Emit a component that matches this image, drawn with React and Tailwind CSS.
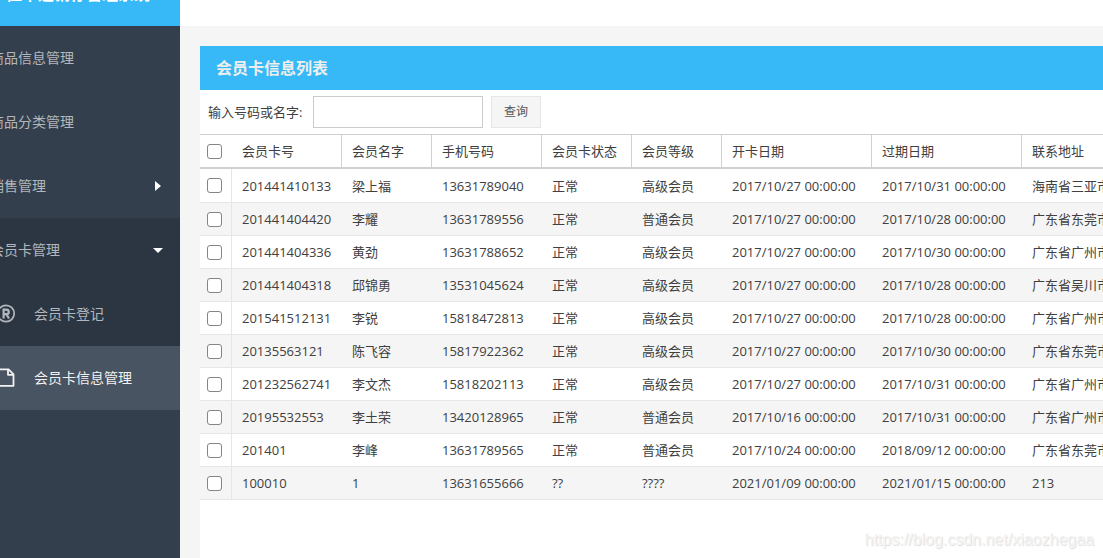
import React from 'react';

const menuItems = [
    { label: '商品信息管理' },
    { label: '商品分类管理' },
    { label: '销售管理', arrow: 'right' },
    { label: '会员卡管理', arrow: 'down', open: true },
];

const columns = [
    { title: '会员卡号', width: 'w-[110px]' },
    { title: '会员名字', width: 'w-[90px]' },
    { title: '手机号码', width: 'w-[110px]' },
    { title: '会员卡状态', width: 'w-[90px]' },
    { title: '会员等级', width: 'w-[90px]' },
    { title: '开卡日期', width: 'w-[150px]' },
    { title: '过期日期', width: 'w-[150px]' },
    { title: '联系地址', width: 'w-[200px]' },
];

const members = [
    ['201441410133', '梁上福', '13631789040', '正常', '高级会员', '2017/10/27 00:00:00', '2017/10/31 00:00:00', '海南省三亚市'],
    ['201441404420', '李耀', '13631789556', '正常', '普通会员', '2017/10/27 00:00:00', '2017/10/28 00:00:00', '广东省东莞市'],
    ['201441404336', '黄劲', '13631788652', '正常', '高级会员', '2017/10/27 00:00:00', '2017/10/30 00:00:00', '广东省广州市'],
    ['201441404318', '邱锦勇', '13531045624', '正常', '高级会员', '2017/10/27 00:00:00', '2017/10/28 00:00:00', '广东省吴川市'],
    ['201541512131', '李锐', '15818472813', '正常', '高级会员', '2017/10/27 00:00:00', '2017/10/28 00:00:00', '广东省广州市'],
    ['20135563121', '陈飞容', '15817922362', '正常', '高级会员', '2017/10/27 00:00:00', '2017/10/30 00:00:00', '广东省东莞市'],
    ['201232562741', '李文杰', '15818202113', '正常', '高级会员', '2017/10/27 00:00:00', '2017/10/31 00:00:00', '广东省广州市'],
    ['20195532553', '李土荣', '13420128965', '正常', '普通会员', '2017/10/16 00:00:00', '2017/10/31 00:00:00', '广东省广州市'],
    ['201401', '李峰', '13631789565', '正常', '普通会员', '2017/10/24 00:00:00', '2018/09/12 00:00:00', '广东省东莞市'],
    ['100010', '1', '13631655666', '??', '????', '2021/01/09 00:00:00', '2021/01/15 00:00:00', '213'],
];

const Arrow = ({ direction }) => (
    <svg className="ml-auto mr-4 h-3 w-3" viewBox="0 0 12 12" fill="#fff" aria-hidden="true">
        {direction === 'right' ? <path d="M3 1v10l6-5z" /> : <path d="M1 4h10L6 9z" />}
    </svg>
);

const RegisteredIcon = () => (
    <svg className="h-5 w-5" viewBox="0 0 20 20" fill="none" stroke="currentColor" aria-hidden="true">
        <circle cx="10" cy="9.5" r="8.2" strokeWidth="1.7" />
        <path d="M7.6 14.5V5.6h2.6c3.4 0 3.4 4.6 0 4.6H7.6M10.4 10.2l2.6 4.3" strokeWidth="2.2" />
    </svg>
);

const FileIcon = () => (
    <svg className="h-5 w-5" viewBox="0 0 20 20" fill="none" stroke="currentColor" strokeWidth="1.8" strokeLinejoin="round" aria-hidden="true">
        <path d="M1.8 1.4h10.8l4.9 4.9v11.5H1.8z" />
        <path d="M12 1.4v5.4h5.5" />
    </svg>
);

// the header is scrolled almost out of view, only its lower part stays visible
const Sidebar = () => (
    <aside className="flex w-[180px] shrink-0 justify-end overflow-hidden bg-[#333f4c] text-sm text-[#b3b7bc]">
        <div className="w-60 shrink-0">
            <div className="flex h-[26px] flex-col justify-end overflow-hidden bg-[#36b9f6]">
                <h1 className="flex h-16 shrink-0 items-center whitespace-nowrap pl-[66px] text-base font-bold text-white">
                    佳丰进销存管理系统
                </h1>
            </div>
            <nav>
                {menuItems.map((item) => (
                    <a key={item.label} href="#" className={`flex h-16 items-center pl-[50px] ${item.open ? 'bg-[#2c3643]' : ''}`}>
                        {item.label}
                        {item.arrow && <Arrow direction={item.arrow} />}
                    </a>
                ))}
                <a href="#" className="flex h-16 items-center gap-[18px] bg-[#2c3643] pl-14">
                    <RegisteredIcon />
                    会员卡登记
                </a>
                <a href="#" className="flex h-16 items-center gap-[18px] bg-[#485461] pl-14 text-[#f2f2f2]">
                    <FileIcon />
                    会员卡信息管理
                </a>
            </nav>
        </div>
    </aside>
);

const Checkbox = ({ label }) => (
    <input
        type="checkbox"
        aria-label={label}
        className="ml-[7px] block h-[15px] w-[15px] appearance-none rounded-[3px] border border-[#858585] bg-white"
    />
);

const MemberTable = () => (
    <table className="w-full min-w-[1022px] table-fixed border-separate border-spacing-0 text-left">
        <thead>
            <tr>
                <th className="h-[35px] w-8 border-b-2 border-t border-[#d0d0d0] p-0"><Checkbox label="全选" /></th>
                {columns.map((col) => (
                    <th key={col.title} className={`${col.width} border-b-2 border-r border-t border-[#d0d0d0] p-0 pl-[10px] font-normal`}>{col.title}</th>
                ))}
            </tr>
        </thead>
        <tbody>
            {members.map((row, index) => (
                <tr key={row[0]} className={`even:bg-[#f5f5f5] ${index === 0 ? 'h-[34px]' : 'h-[33px]'}`}>
                    <td className="border-b border-r border-[#e6e6e6] p-0"><Checkbox label={row[0]} /></td>
                    {row.map((cell, i) => (
                        <td key={i} className="whitespace-nowrap border-b border-[#e6e6e6] p-0 pl-[10px]">{cell}</td>
                    ))}
                </tr>
            ))}
        </tbody>
    </table>
);

const App = () => (
    <div className="relative flex min-h-screen overflow-hidden bg-[#f5f5f5] font-['Open_Sans','Noto_Sans_CJK_SC',sans-serif] text-[13px] leading-5 text-[#404040]">
        <Sidebar />
        <div className="flex min-w-0 flex-1 flex-col">
            <header className="h-[26px] bg-white" />
            <main className="ml-5 mt-5 flex-1 overflow-hidden bg-white">
                <h2 className="flex h-11 items-center bg-[#36b9f6] pl-4 text-base font-bold text-[#eee]">会员卡信息列表</h2>
                <form className="flex h-11 items-center pl-2">
                    <label htmlFor="keyword" className="w-[105px]">输入号码或名字:</label>
                    <input id="keyword" type="text" className="h-8 w-[170px] border border-[#ccc] bg-white px-2" />
                    <button type="button" className="ml-2 h-8 w-[50px] border border-[#e6e6e6] bg-[#f5f5f5] text-xs text-[#555]">查询</button>
                </form>
                <MemberTable />
            </main>
        </div>
        <span className="absolute bottom-2 right-[9px] font-['Liberation_Sans',sans-serif] text-base leading-5 text-[#f4f4f4] [text-shadow:1px_1px_1px_#ddd]">
            https://blog.csdn.net/xiaozhegaa
        </span>
    </div>
);

export default App;
